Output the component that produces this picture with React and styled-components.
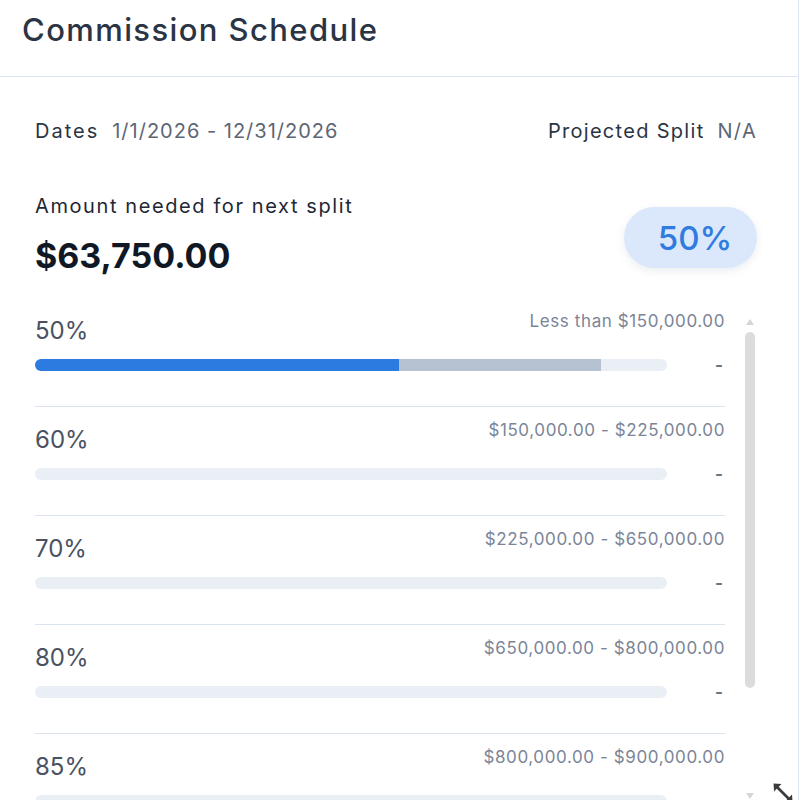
import React from "react";
import styled, { createGlobalStyle } from "styled-components";

const Global = createGlobalStyle`
  html, body { margin: 0; padding: 0; background: #ffffff; }
  body { font-family: Inter, "Open Sans", sans-serif; overflow: hidden; }
  * { box-sizing: border-box; }
`;

const Card = styled.div`
  position: relative;
  width: 799px;
  border-right: 1px solid #dfe7f2;
  background: #fff;
`;

const Header = styled.div`
  height: 77px;
  padding: 12px 22px 0;
  border-bottom: 1px solid #dde6f2;
`;

const Title = styled.h2`
  margin: 0;
  font-family: Inter, sans-serif;
  font-size: 31px;
  line-height: 36px;
  font-weight: 500;
  color: #2a3444;
  letter-spacing: 1.4px;
`;

const Body = styled.div`
  padding: 42px 41px 0 35px;
`;

const InfoRow = styled.div`
  display: flex;
  justify-content: space-between;
  align-items: center;
  height: 24px;
`;

const Info = styled.div`
  display: flex;
  align-items: baseline;
  gap: 13px;
  font-size: 20px;
  line-height: 24px;
`;

const InfoLabel = styled.span`
  color: #2b3444;
  font-weight: 400;
  letter-spacing: ${(p) => p.$ls || "1.3px"};
`;

const InfoValue = styled.span`
  color: #5d6675;
  letter-spacing: ${(p) => p.$ls || "1px"};
`;

const Summary = styled.div`
  display: flex;
  justify-content: space-between;
  align-items: flex-start;
  margin-top: 51px;
`;

const SummaryLeft = styled.div`
  display: flex;
  flex-direction: column;
`;

const SummaryLabel = styled.div`
  font-size: 20px;
  line-height: 24px;
  color: #1f2734;
  letter-spacing: 1.6px;
`;

const Amount = styled.div`
  margin-top: 16px;
  font-size: 34px;
  line-height: 44px;
  font-weight: 700;
  color: #101826;
`;

const Badge = styled.div`
  margin-top: 13px;
  width: 133px;
  height: 61px;
  border-radius: 31px;
  background: #dbe8fb;
  color: #2f7be0;
  font-size: 33px;
  font-weight: 500;
  display: flex;
  align-items: center;
  justify-content: center;
  padding-left: 9px;
  box-shadow: 0 3px 8px rgba(60, 80, 120, 0.1);
`;

const ListArea = styled.div`
  margin-top: 20px;
  height: 506px;
  overflow: hidden;
  display: flex;
  align-items: flex-start;
`;

const Rows = styled.div`
  width: 690px;
  display: flex;
  flex-direction: column;
`;

const Row = styled.div`
  height: 109px;
  padding-top: 12px;
  border-bottom: 1px solid #dbe3ee;
  display: flex;
  flex-direction: column;
  flex-shrink: 0;
`;

const TopLine = styled.div`
  display: flex;
  justify-content: space-between;
  align-items: flex-start;
  height: 35px;
`;

const Pct = styled.div`
  margin-top: 7px;
  font-size: 24px;
  line-height: 28px;
  color: #4a5261;
`;

const Range = styled.div`
  font-size: 17px;
  line-height: 22px;
  color: #7b8597;
  letter-spacing: 0.6px;
  margin-right: 0;
`;

const BarLine = styled.div`
  margin-top: 10px;
  display: flex;
  align-items: center;
`;

const Track = styled.div`
  width: 632px;
  height: 12px;
  border-radius: 6px;
  background: #eaeff6;
  overflow: hidden;
  display: flex;
`;

const Fill = styled.div`
  height: 100%;
  background: ${(p) => p.$color};
`;

const Dash = styled.div`
  flex: 1;
  text-align: right;
  padding-right: 2px;
  font-size: 17px;
  color: #6b7380;
  font-weight: 700;
`;

const Scrollbar = styled.div`
  margin-left: 20px;
  width: 10px;
  height: 506px;
  display: flex;
  flex-direction: column;
  align-items: center;
`;

const ArrowBox = styled.div`
  height: ${(p) => p.$h}px;
  display: flex;
  align-items: ${(p) => (p.$down ? "center" : "flex-end")};
  padding-bottom: ${(p) => (p.$down ? 0 : 7)}px;
`;

const Thumb = styled.div`
  width: 10px;
  height: 356px;
  border-radius: 5px;
  background: #dcdcdc;
`;

const Spacer = styled.div`
  flex: 1;
`;

const Resize = styled.div`
  position: absolute;
  right: 3px;
  top: 781px;
  width: 24px;
  height: 24px;
`;

const tiers = [
  { pct: "50%", range: "Less than $150,000.00", blue: 364, gray: 202 },
  { pct: "60%", range: "$150,000.00 - $225,000.00" },
  { pct: "70%", range: "$225,000.00 - $650,000.00" },
  { pct: "80%", range: "$650,000.00 - $800,000.00" },
  { pct: "85%", range: "$800,000.00 - $900,000.00" },
];

const Tri = ({ down }) => (
  <svg width="8" height="6" viewBox="0 0 8 6">
    <path d={down ? "M0 0 L8 0 L4 6 Z" : "M0 6 L8 6 L4 0 Z"} fill="#d6d6d6" />
  </svg>
);

export default function App() {
  return (
    <>
      <Global />
      <Card>
        <Header>
          <Title>Commission Schedule</Title>
        </Header>
        <Body>
          <InfoRow>
            <Info>
              <InfoLabel $ls="2px">Dates</InfoLabel>
              <InfoValue>1/1/2026 - 12/31/2026</InfoValue>
            </Info>
            <Info>
              <InfoLabel $ls="1.3px">Projected Split</InfoLabel>
              <InfoValue $ls="1.3px">N/A</InfoValue>
            </Info>
          </InfoRow>
          <Summary>
            <SummaryLeft>
              <SummaryLabel>Amount needed for next split</SummaryLabel>
              <Amount>$63,750.00</Amount>
            </SummaryLeft>
            <Badge>50%</Badge>
          </Summary>
          <ListArea>
            <Rows>
              {tiers.map((t) => (
                <Row key={t.pct}>
                  <TopLine>
                    <Pct>{t.pct}</Pct>
                    <Range>{t.range}</Range>
                  </TopLine>
                  <BarLine>
                    <Track>
                      {t.blue ? <Fill $color="#2c7be0" style={{ width: t.blue }} /> : null}
                      {t.gray ? <Fill $color="#b6c1d1" style={{ width: t.gray }} /> : null}
                    </Track>
                    <Dash>-</Dash>
                  </BarLine>
                </Row>
              ))}
            </Rows>
            <Scrollbar>
              <ArrowBox $h={34}>
                <Tri />
              </ArrowBox>
              <Thumb />
              <Spacer />
              <ArrowBox $h={16} $down>
                <Tri down />
              </ArrowBox>
            </Scrollbar>
          </ListArea>
        </Body>
        <Resize>
          <svg width="24" height="24" viewBox="0 0 24 24">
            <path d="M5 5 L19 19" stroke="#3c3c3c" strokeWidth="2.8" strokeLinecap="round" />
            <path d="M2.5 2.5 L10.5 3 L3 10.5 Z" fill="#3c3c3c" />
            <path d="M21.5 21.5 L13.5 21 L21 13.5 Z" fill="#3c3c3c" />
          </svg>
        </Resize>
      </Card>
    </>
  );
}
